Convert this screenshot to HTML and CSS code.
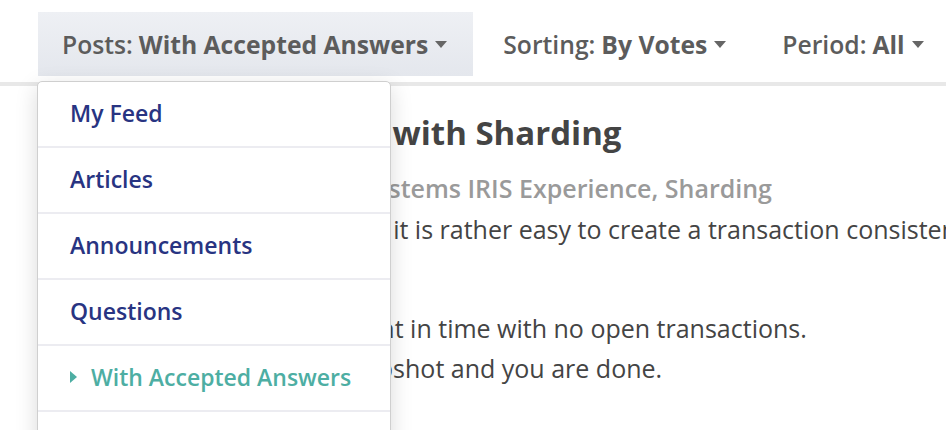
FILE: index.html
```html
<!DOCTYPE html>
<html lang="en">
<head>
<meta charset="utf-8">
<title>Posts</title>
<link rel="stylesheet" href="styles.css">
</head>
<body>
<div class="page">
  <nav class="filters">
    <div class="filter filter-open">
      <span class="filter-label">Posts:</span>
      <span class="filter-value">With Accepted Answers</span>
      <span class="caret"></span>
      <ul class="menu">
        <li class="menu-item">My Feed</li>
        <li class="menu-item">Articles</li>
        <li class="menu-item">Announcements</li>
        <li class="menu-item">Questions</li>
        <li class="menu-item menu-item-active"><span class="pointer"></span>With Accepted Answers</li>
      </ul>
    </div>
    <div class="filter">
      <span class="filter-label">Sorting:</span>
      <span class="filter-value">By Votes</span>
      <span class="caret"></span>
    </div>
    <div class="filter">
      <span class="filter-label">Period:</span>
      <span class="filter-value">All</span>
      <span class="caret"></span>
    </div>
  </nav>
  <article class="post">
    <h2 class="post-title">Consistent Backups with Sharding</h2>
    <div class="post-tags">Backup, Databases, InterSystems IRIS Experience, Sharding</div>
    <p class="post-text">With a non-sharded system, it is rather easy to create a transaction consistent backup of your data:</p>
    <ol class="post-list">
      <li>First of all, wait for a point in time with no open transactions.</li>
      <li>Then, quickly take a snapshot and you are done.</li>
    </ol>
  </article>
</div>
</body>
</html>
```

FILE: styles.css
```css
html, body {
  margin: 0;
  padding: 0;
  background: #ffffff;
  overflow: hidden;
}

.page {
  width: 946px;
  height: 430px;
  overflow: hidden;
  font-family: "Open Sans", "Liberation Sans", sans-serif;
  color: #444444;
}

.filters {
  display: flex;
  gap: 6px;
  padding: 12px 0 6px 38px;
  height: 64px;
  border-bottom: 4px solid #e8e8e8;
  white-space: nowrap;
}

.filter {
  position: relative;
  display: flex;
  align-items: center;
  height: 64px;
  padding: 0 26px 0 24px;
  font-size: 24.7px;
  color: #5c5c5c;
}

.filter-open {
  background: linear-gradient(#eef0f4, #e4e7ed);
}

.filter-label {
  font-weight: 600;
  margin-right: 6px;
}

.filter-value {
  font-weight: 700;
}

.caret {
  width: 0;
  height: 0;
  margin-left: 7px;
  border-left: 6.5px solid transparent;
  border-right: 6.5px solid transparent;
  border-top: 7px solid #666666;
}

.menu {
  position: absolute;
  top: 69px;
  left: -1px;
  width: 352px;
  margin: 0;
  padding: 0 0 40px;
  list-style: none;
  background: #ffffff;
  border: 1px solid #cfcfcf;
  border-radius: 5px;
  box-shadow: 0 6px 22px rgba(0, 0, 0, 0.15);
  z-index: 10;
}

.menu-item {
  display: flex;
  align-items: center;
  height: 66px;
  padding: 0 0 3px 32px;
  box-sizing: border-box;
  font-size: 23px;
  font-weight: 600;
  color: #283482;
  border-bottom: 2px solid #ececf1;
}

.menu-item-active {
  color: #4daea3;
}

.pointer {
  width: 0;
  height: 0;
  margin-right: 14px;
  border-top: 6.5px solid transparent;
  border-bottom: 6.5px solid transparent;
  border-left: 7px solid #4daea3;
}

.post {
  padding: 27px 0 0 61px;
  white-space: nowrap;
}

.post-title {
  margin: 0;
  font-size: 33px;
  line-height: 40px;
  font-weight: 700;
  color: #444444;
}

.post-tags {
  margin-top: 15px;
  font-size: 25px;
  line-height: 40px;
  font-weight: 600;
  color: #9a9a9a;
}

.post-text {
  margin: 1px 0 0;
  font-size: 25px;
  line-height: 40px;
}

.post-list {
  margin: 59px 0 0;
  padding-left: 40px;
  font-size: 25px;
  line-height: 40px;
}
```
